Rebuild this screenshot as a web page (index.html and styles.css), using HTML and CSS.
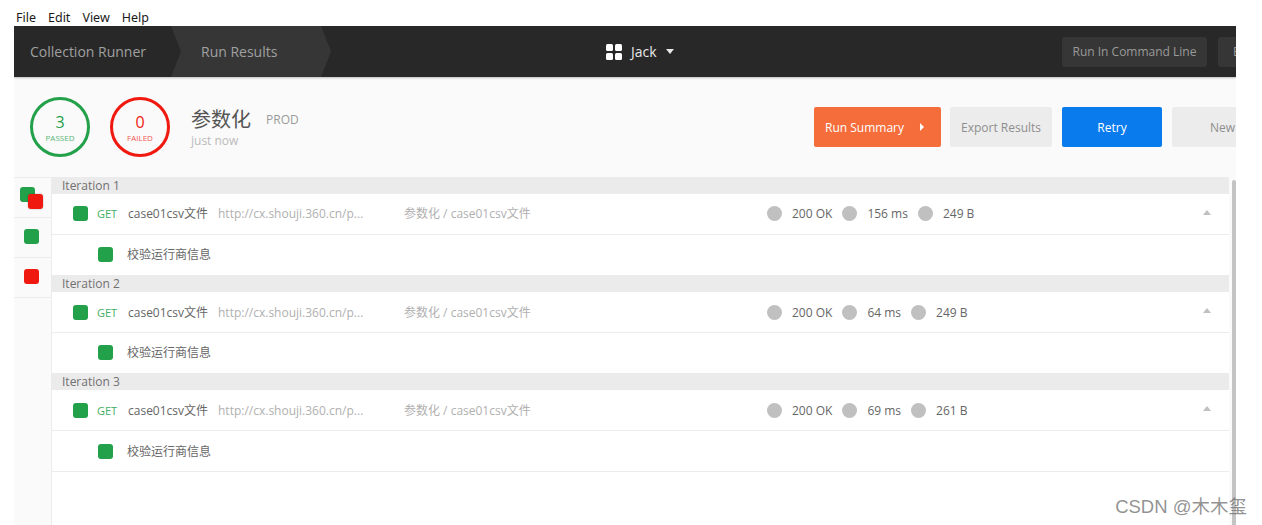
FILE: index.html
```html
<!DOCTYPE html>
<html>
<head>
  <meta charset="UTF-8">
  <title>Run Results</title>
  <link rel="stylesheet" href="styles.css">
</head>
<body>
  <!-- Window menu -->
  <div class="menu-bar">
    <span>File</span>
    <span>Edit</span>
    <span>View</span>
    <span>Help</span>
  </div>

  <div class="app">
    <!-- Dark header -->
    <div class="header">
      <div class="crumbs">
        <span class="crumb-first">Collection Runner</span>
        <span class="crumb-second">Run Results</span>
      </div>
      <div class="workspace">
        <svg class="workspace-icon" width="16" height="16" viewBox="0 0 16 16">
          <rect x="0" y="0" width="7" height="7" rx="1.5"></rect>
          <rect x="9" y="0" width="7" height="7" rx="1.5"></rect>
          <rect x="0" y="9" width="7" height="7" rx="1.5"></rect>
          <rect x="9" y="9" width="7" height="7" rx="1.5"></rect>
        </svg>
        <span>Jack</span>
        <i class="caret-down"></i>
      </div>
      <div class="header-actions">
        <button class="dark-button">Run In Command Line</button>
        <button class="dark-button dark-button-cut">Exit</button>
      </div>
    </div>

    <!-- Run summary -->
    <div class="summary">
      <div class="stat stat-passed"><b>3</b><small>PASSED</small></div>
      <div class="stat stat-failed"><b>0</b><small>FAILED</small></div>
      <div class="run-info">
        <div class="run-title"><h1>参数化</h1><span>PROD</span></div>
        <div class="run-time">just now</div>
      </div>
      <div class="summary-actions">
        <button class="btn btn-orange">Run Summary <i class="caret-right"></i></button>
        <button class="btn btn-grey btn-export">Export Results</button>
        <button class="btn btn-blue">Retry</button>
        <button class="btn btn-grey btn-new">New</button>
      </div>
    </div>

    <div class="results">
      <!-- Filter rail -->
      <div class="rail">
        <div class="rail-item">
          <span class="both"><i class="square green"></i><i class="square red overlap"></i></span>
        </div>
        <div class="rail-item"><i class="square green"></i></div>
        <div class="rail-item"><i class="square red"></i></div>
      </div>

      <div class="iterations">
        <div class="iteration-title">Iteration 1</div>
        <div class="request-row request-row-first">
          <i class="square green"></i>
          <span class="method">GET</span>
          <span class="req-name">case01csv文件</span>
          <span class="req-url">http://cx.shouji.360.cn/p...</span>
          <span class="req-path">参数化 / case01csv文件</span>
          <span class="metrics">
            <i class="dot"></i><span class="metric-status">200 OK</span>
            <i class="dot"></i><span class="metric-time">156 ms</span>
            <i class="dot"></i><span>249 B</span>
          </span>
          <i class="caret-up"></i>
        </div>
        <div class="test-row"><i class="square green"></i><span>校验运行商信息</span></div>

        <div class="iteration-title">Iteration 2</div>
        <div class="request-row">
          <i class="square green"></i>
          <span class="method">GET</span>
          <span class="req-name">case01csv文件</span>
          <span class="req-url">http://cx.shouji.360.cn/p...</span>
          <span class="req-path">参数化 / case01csv文件</span>
          <span class="metrics">
            <i class="dot"></i><span class="metric-status">200 OK</span>
            <i class="dot"></i><span class="metric-time">64 ms</span>
            <i class="dot"></i><span>249 B</span>
          </span>
          <i class="caret-up"></i>
        </div>
        <div class="test-row"><i class="square green"></i><span>校验运行商信息</span></div>

        <div class="iteration-title">Iteration 3</div>
        <div class="request-row">
          <i class="square green"></i>
          <span class="method">GET</span>
          <span class="req-name">case01csv文件</span>
          <span class="req-url">http://cx.shouji.360.cn/p...</span>
          <span class="req-path">参数化 / case01csv文件</span>
          <span class="metrics">
            <i class="dot"></i><span class="metric-status">200 OK</span>
            <i class="dot"></i><span class="metric-time">69 ms</span>
            <i class="dot"></i><span>261 B</span>
          </span>
          <i class="caret-up"></i>
        </div>
        <div class="test-row"><i class="square green"></i><span>校验运行商信息</span></div>
      </div>

      <div class="scrollbar"></div>
    </div>
  </div>

  <div class="watermark">CSDN @木木玺</div>
</body>
</html>
```

FILE: styles.css
```css
:root {
  --green: #23a04a;
  --red: #f0190f;
  --border: #ececec;
  --muted: #9a9a9a;
  --text: #666666;
}

html, body {
  height: 100%;
}

body {
  margin: 0;
  overflow: hidden;
  background-color: #ffffff;
  font-family: "Open Sans", "Noto Sans CJK SC", sans-serif;
  font-size: 12px;
  color: var(--text);
}

button {
  font-family: inherit;
  border: none;
  cursor: pointer;
}

i {
  display: block;
  flex: none;
}

/* Menu bar */
.menu-bar {
  height: 26px;
  display: flex;
  align-items: flex-end;
  gap: 12px;
  padding: 0 0 0 16px;
  box-sizing: border-box;
  font-family: "Noto Sans", sans-serif;
  font-size: 12.5px;
  color: #1a1a1a;
}

.app {
  width: 1222px;
  height: 499px;
  margin-left: 14px;
  overflow: hidden;
  display: flex;
  flex-direction: column;
  background-color: #fafafa;
}

/* Header */
.header {
  flex: none;
  height: 51px;
  display: flex;
  align-items: center;
  position: relative;
  background-color: #282828;
  box-shadow: 0 1px 2px rgba(0, 0, 0, 0.25);
  font-size: 14px;
  color: #a0a0a0;
}

.crumbs {
  display: flex;
  height: 100%;
  align-items: center;
}

.crumb-first {
  width: 157px;
  padding-left: 16px;
  box-sizing: border-box;
}

.crumb-second {
  width: 160px;
  height: 100%;
  line-height: 51px;
  padding-left: 30px;
  box-sizing: border-box;
  background-color: #363636;
  clip-path: polygon(0 0, 150px 0, 160px 50%, 150px 100%, 0 100%, 10px 50%);
}

.workspace {
  position: absolute;
  left: 592px;
  display: flex;
  align-items: center;
  gap: 9px;
  color: #e8e8e8;
}

.workspace-icon {
  fill: #ffffff;
}

.caret-down {
  width: 0;
  height: 0;
  border-left: 4.5px solid transparent;
  border-right: 4.5px solid transparent;
  border-top: 5px solid #e8e8e8;
}

.header-actions {
  margin-left: auto;
  display: flex;
  gap: 11px;
  margin-right: -30px;
}

.dark-button {
  width: 145px;
  height: 30px;
  padding: 0;
  border-radius: 3px;
  background-color: #363636;
  color: #9a9a9a;
  font-size: 12px;
}

.dark-button-cut {
  width: 48px;
  padding-left: 15px;
  text-align: left;
}

/* Summary */
.summary {
  flex: none;
  height: 100px;
  display: flex;
  align-items: center;
  padding-left: 16px;
  box-sizing: border-box;
}

.stat {
  width: 60px;
  height: 60px;
  margin-right: 20px;
  border: 3px solid;
  border-radius: 50%;
  box-sizing: border-box;
  display: flex;
  flex-direction: column;
  align-items: center;
  justify-content: center;
}

.stat b {
  font-weight: 400;
  font-size: 16px;
  line-height: 22px;
}

.stat small {
  font-size: 8px;
  line-height: 10px;
  opacity: 0.75;
}

.stat-passed {
  border-color: var(--green);
  color: var(--green);
}

.stat-failed {
  border-color: var(--red);
  color: var(--red);
}

.run-info {
  margin-left: 1px;
  margin-bottom: 2px;
}

.run-title {
  display: flex;
  align-items: center;
  gap: 15px;
}

.run-title h1 {
  margin: 1px 0 -1px;
  font-size: 20px;
  line-height: 30px;
  font-weight: 400;
  color: #555555;
}

.run-title span {
  color: var(--muted);
}

.run-time {
  font-size: 12px;
  line-height: 14px;
  color: #bbbbbb;
}

.summary-actions {
  margin-left: auto;
  display: flex;
  gap: 9px;
  margin-right: -37px;
}

.btn {
  height: 40px;
  padding: 0;
  border-radius: 2px;
  font-size: 12px;
  display: flex;
  align-items: center;
  justify-content: center;
}

.btn-orange {
  width: 127px;
  padding-left: 11px;
  justify-content: flex-start;
  gap: 16px;
  background-color: #f46d3b;
  color: #ffffff;
}

.btn-grey {
  background-color: #ececec;
  color: #8e8e8e;
}

.btn-export {
  width: 102px;
}

.btn-blue {
  width: 100px;
  margin: 0 1px;
  background-color: #097bed;
  color: #ffffff;
}

.btn-new {
  width: 101px;
}

.caret-right {
  width: 0;
  height: 0;
  border-top: 4px solid transparent;
  border-bottom: 4px solid transparent;
  border-left: 4px solid #ffffff;
}

/* Results */
.results {
  flex: 1;
  display: flex;
  min-height: 0;
}

.rail {
  flex: none;
  width: 38px;
  box-sizing: border-box;
  border-right: 1px solid var(--border);
  background-color: #fafafa;
}

.rail-item {
  height: 40px;
  box-sizing: border-box;
  border-top: 1px solid var(--border);
  display: flex;
  justify-content: center;
  padding: 11px 3px 0 0;
}

.rail-item:last-child {
  border-bottom: 1px solid var(--border);
  height: 41px;
}

.both {
  display: block;
  position: relative;
  width: 23px;
  height: 22px;
  margin-top: -2px;
}

.overlap {
  position: absolute;
  left: 8px;
  top: 7px;
  box-shadow: 0 0 2px rgba(0, 0, 0, 0.3);
}

.square {
  width: 15px;
  height: 15px;
  border-radius: 3px;
}

.green {
  background-color: var(--green);
}

.red {
  background-color: var(--red);
}

.iterations {
  width: 1177px;
  flex: none;
  background-color: #ffffff;
}

.iteration-title {
  height: 17px;
  line-height: 17px;
  padding-left: 10px;
  background-color: #ebebeb;
  color: #707070;
  font-size: 12px;
}

.request-row {
  height: 41px;
  box-sizing: border-box;
  border-bottom: 1px solid var(--border);
  padding-left: 21px;
  display: flex;
  align-items: center;
  position: relative;
  font-size: 12px;
}

.request-row-first {
  padding-bottom: 2px;
}

.method {
  margin-left: 9px;
  width: 31px;
  color: #3fae62;
  font-size: 11px;
}

.req-name {
  width: 90px;
}

.req-url {
  width: 186px;
  color: #b0b0b0;
}

.req-path {
  width: 363px;
  color: #b0b0b0;
}

.metrics {
  display: flex;
  align-items: center;
}

.dot {
  width: 15px;
  height: 15px;
  margin-right: 10px;
  border-radius: 50%;
  background-color: #c0c0c0;
}

.metric-status,
.metric-time {
  margin-right: 10px;
}

.caret-up {
  position: absolute;
  right: 18px;
  top: 16px;
  width: 0;
  height: 0;
  border-left: 4px solid transparent;
  border-right: 4px solid transparent;
  border-bottom: 5px solid #c0c0c0;
}

.test-row {
  height: 40px;
  box-sizing: border-box;
  padding: 0 0 2px 46px;
  display: flex;
  align-items: center;
  gap: 14px;
  font-size: 12px;
}

.test-row:last-child {
  height: 41px;
  padding-bottom: 0;
  border-bottom: 1px solid var(--border);
}

.scrollbar {
  width: 4px;
  margin: 3px 0 0 3px;
  flex: none;
  background-color: #c4c4c4;
  border-radius: 2px 2px 0 0;
}

/* Watermark over the bottom corner */
.watermark {
  position: absolute;
  right: 15px;
  top: 492px;
  font-family: "Liberation Sans", "Noto Sans CJK SC", sans-serif;
  font-size: 18.5px;
  color: rgba(110, 110, 110, 0.75);
}
```
